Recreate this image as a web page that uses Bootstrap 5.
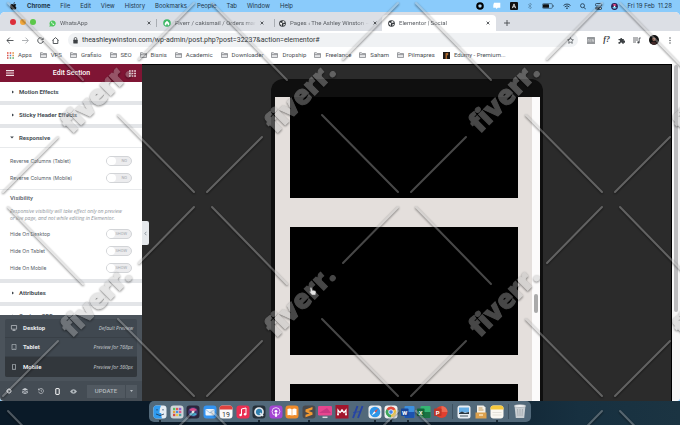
<!DOCTYPE html>
<html lang="en">
<head>
<meta charset="utf-8">
<meta name="viewport" content="width=device-width, initial-scale=1">
<title>Elementor | Social</title>
<link href="https://cdn.jsdelivr.net/npm/bootstrap@5.3.0/dist/css/bootstrap.min.css" rel="stylesheet">
<style>
body{font:6px/8px Roboto,"Liberation Sans",sans-serif;color:#3c4043;background:#0b1b28 linear-gradient(90deg,#0a1a28 0 60%,#173040 85%,#1b3442);height:100vh;overflow:hidden}
svg{display:block;flex:none}
a{color:inherit;text-decoration:none}
button{border:0;background:none;padding:0;color:inherit;font:inherit}
.menubar{height:12px;background:#8acbfb;font-family:Inter,sans-serif;color:#1d3447;padding:0 8px 0 10px}
.menubar nav{gap:10px}
.menubar .status{gap:9px}
.desk{background:#8acbfb;min-height:0}
.browser{background:#fff;border-radius:5px 5px 4px 4px;overflow:hidden;min-height:0}
.tabs{height:19px;background:#dcdfe5;padding:3px 0 0 10px}
.lights{gap:4px;width:33px;padding-bottom:3px}
.lights i{width:6px;height:6px;border-radius:50%}
.red{background:#dc2e3a}.amber{background:#f3a83b}.green{background:#5cc84a}
.tab-item{width:114px;padding:0 5px 0 6px;gap:4px;color:#5a5e63;border-right:1px solid #a9adb3;margin:4px 0;height:8px}
.tab-item.wide{width:118px;padding-right:10px}
.tab-item.slim{width:107px;padding:0 4px;border-color:transparent}
.tab-item.current{background:#fff;border:0;border-radius:4px 4px 0 0;margin:0;height:16px;padding-right:6px}
.tab-name{flex:1;overflow:hidden;white-space:nowrap;-webkit-mask:linear-gradient(90deg,#000 85%,transparent)}
.toolbar{height:18px;padding:0 9px 0 6px;gap:9px}
.toolbar .moves{gap:8px}
.address{background:#f0f2f4;border-radius:7px;height:14px;padding:0 4px 0 5px;gap:4px}
.address input{border:0;background:none;outline:0;padding:0;min-width:0;font:7px/10px Roboto,sans-serif;color:#33373b}
.toolbar .tools{gap:8px}
.fq{font:italic 700 8px/8px "Liberation Serif",serif}
.marks{height:15px;padding:0 7px 3px;gap:8px;color:#4a4e53;white-space:nowrap;overflow:hidden}
.marks a{gap:4px}
.panel{width:142px;background:#fff;color:#555d66;min-height:0}
.panel-top{height:18px;background:#7f1534;color:#fff;font-size:7px;font-weight:500;padding:0 6px}
.panel-scroll{overflow:hidden;min-height:0}
.fold{height:19px;width:100%;padding:0 12px;gap:5px;font-weight:700;color:#495157;text-align:left}
.fold.unfolded{padding-left:10px}
.split{height:4px;background:#e3e5e8;flex:none}
.ctl{height:17px;padding:0 10px;font-family:Inter,sans-serif;font-size:5px}
.group{border-top:1px solid #e8eaec;padding:4px 0 3px}
.sub{padding:0 10px;font-weight:500}
.tog{appearance:none;width:26px;height:10px;border-radius:5px;background:#ececee;border:1px solid #d2d4d7;margin:0;display:flex;align-items:center;justify-content:space-between;padding-right:4px}
.tog::before{content:"";width:9px;height:8px;border-radius:4px;background:#fff}
.tog::after{content:attr(data-off);font:4px/6px Roboto,sans-serif;color:#a4a8ac}
.hint{font:italic 5px/7px "Open Sans",sans-serif;color:#8d9399;padding:6px 0 3px 10px;white-space:nowrap}
.devices{background:#4b535b;padding:4px 5px;color:#e9ebed}
.devices .list{background:#404850;border-radius:2px;overflow:hidden}
.devices button{height:19px;width:100%;padding:0 4px 0 5px;gap:5px;border-bottom:1px solid #394047}
.devices button.chosen{background:#32373c;height:20px;border:0}
.devices .nm{font-weight:700}
.devices .nt{font:italic 5px/8px "Open Sans",sans-serif;color:#c9ced2}
.foot{height:20px;background:#444c54;color:#c5cacf;padding:0 5px 0 6px}
.upd{background:#515961;height:13px;width:38px;font-weight:500;color:#b3b9be}
.upd.more{width:11px;margin-left:1px}
.preview{background:#2b2b2b;border-top:1px solid #000;border-right:1px solid #000;min-width:0}
.phone{width:272px;margin-top:14px;background:#0f0f0f;border-radius:12px 12px 0 0;padding:18px 3px 0 4px;min-height:0}
.screen{background:#e4dfdc;overflow:hidden;min-height:0}
.blocks{padding:0 14px 0 15px;gap:29px;min-height:0}
.blocks div{background:#000;flex:none}
.b1{height:101px}.b2{height:128px}.b3{height:30px}
.vbar{width:8px;background:#fcfbfb;padding:0 2px}
.vbar i{display:block;width:4px;height:19px;border-radius:2px;background:#aaa;margin-top:197px}
.pagebar{width:8px;background:#f7f7f7;padding:1px 2px}
.pagebar i{display:block;width:4px;height:247px;background:#bcbcbe;border-radius:2px}
.fold-tab{position:absolute;left:100%;top:157px;width:7px;height:24px;background:#e6e9ec;border-radius:0 2px 2px 0;z-index:2}
.pointer{position:absolute;left:309px;top:287px}
.dock{width:382px;height:21px;background:#52697a;border-radius:5px;padding:0 4px;margin-bottom:3px}
.dock-main{width:295px}.dock-docs{width:47px}
.dock .bar{width:1px;height:15px;background:#3d5160}
.open-app{position:relative}
.open-app::after{content:"";position:absolute;left:6px;bottom:-3px;width:2px;height:2px;border-radius:50%;background:#0a141c}
.stamp{position:absolute;inset:0;width:100%;height:100%;pointer-events:none;z-index:9}
</style>
<script src="https://cdn.jsdelivr.net/npm/bootstrap@5.3.0/dist/js/bootstrap.bundle.min.js"></script>
</head>
<body class="d-flex flex-column position-relative">
<svg width="0" height="0" class="position-absolute" aria-hidden="true">
<symbol id="folder" viewBox="0 0 7 6"><path d="M.5 5.500V.7h2l.7.8h3.300v4zM.5 2.600h6" fill="#e4e5e7" stroke="#7a7d81" stroke-width=".7"/></symbol>
<symbol id="globe" viewBox="0 0 7 7"><circle cx="3.500" cy="3.500" r="3.300" fill="#303438"/><path d="M1 2.600l1.500.2.8.8-.6.7.3 1.300-.5.2C1.400 5 .9 4 1 2.600zM3.300.9l1.900.4.8 1.200-1.200.1-.6.7-1-.8.6-.6zM4.500 4l1.500.1-.7 1.300-.9.3z" fill="#fff"/></symbol>
<symbol id="cross" viewBox="0 0 4 4"><path d="M.6.6l2.800 2.800M3.400.6L.6 3.400" stroke="#33373b" stroke-width=".8"/></symbol>
<symbol id="side" viewBox="0 0 2 4"><path d="M0 .5L2 2 0 3.500z" fill="#3b4249"/></symbol>
</svg>

<header class="menubar d-flex align-items-center justify-content-between flex-shrink-0">
<nav class="d-flex align-items-center" aria-label="Menu bar">
<svg width="7" height="8" viewBox="0 0 7 8"><path d="M4.900.2C4 .3 3.400 1 3.500 1.800 4.300 1.800 5 1 4.900.2zM5 2c-.7 0-1 .4-1.500.4S2.600 2 2 2C1 2 .2 2.900.2 4.300c0 1.600 1 3.300 1.900 3.300.5 0 .8-.3 1.400-.3s.8.3 1.300.3c.8 0 1.500-1.200 1.700-1.900C5.200 5.100 5.200 3.400 6.300 2.800 6 2.300 5.500 2 5 2z" fill="#111"/></svg>
<a href="#" class="fw-bold">Chrome</a><a href="#">File</a><a href="#">Edit</a><a href="#">View</a><a href="#">History</a><a href="#">Bookmarks</a><a href="#">People</a><a href="#">Tab</a><a href="#">Window</a><a href="#">Help</a>
</nav>
<div class="status d-flex align-items-center">
<svg width="8" height="8" viewBox="0 0 8 8"><circle cx="4" cy="4" r="3.800" fill="#000"/><rect x="2.500" y="2.500" width="3" height="3" rx=".8" fill="#a9d8fb"/></svg>
<svg width="8" height="8" viewBox="0 0 8 8"><path d="M1 .8h6.300v5H4.600L3.500 7.200 3 5.800H.3V3z" fill="#fff"/></svg>
<svg width="8" height="8" viewBox="0 0 8 8"><rect width="8" height="8" rx="1" fill="#111"/><path d="M2.300 6.200L4 1.900l1.700 4.300M2.900 4.800h2.200" fill="none" stroke="#fff" stroke-width=".8"/></svg>
<svg width="6" height="8" viewBox="0 0 6 8"><path d="M1 2.200l3.600 3.400L3 7V1l1.600 1.400L1 5.800" fill="none" stroke="#5b8db0" stroke-width=".7"/></svg>
<svg width="12" height="6" viewBox="0 0 12 6"><rect x=".4" y=".6" width="10" height="4.800" rx="1.200" fill="none" stroke="#37556b" stroke-width=".7"/><rect x="1" y="1.200" width="6" height="3.600" rx=".6" fill="#111"/><path d="M11.200 2v2" stroke="#37556b" stroke-width=".8"/></svg>
<svg width="8" height="7" viewBox="0 0 8 7"><path d="M.5 2.500a5 5 0 017 0M1.700 3.900a3.300 3.300 0 014.600 0" fill="none" stroke="#1d3447" stroke-width=".9"/><path d="M2.900 5a1.600 1.600 0 012.200 0L4 6.300z" fill="#1d3447"/></svg>
<svg width="6" height="7" viewBox="0 0 6 7"><circle cx="2.500" cy="2.700" r="2" fill="none" stroke="#1d3447" stroke-width=".8"/><path d="M4 4.300l1.700 2" stroke="#1d3447" stroke-width=".9"/></svg>
<svg width="7" height="7" viewBox="0 0 7 7"><rect x=".4" y=".5" width="6.200" height="2.500" rx="1.200" fill="none" stroke="#1d3447" stroke-width=".8"/><rect x=".2" y="3.800" width="6.600" height="3" rx="1.500" fill="#1d3447"/><circle cx="5.200" cy="5.300" r=".8" fill="#fff"/></svg>
<svg width="7" height="7" viewBox="0 0 7 7"><circle cx="3.500" cy="3.500" r="3.400" fill="#2a1e52"/><path d="M1.500 2a2.500 2.500 0 014 .2L3.600 3z" fill="#e84a86"/><path d="M1.300 4.400l2.200-1 2.200 1a2.500 2.500 0 01-4.400 0z" fill="#6bd0ef"/><circle cx="3.500" cy="3.500" r=".8" fill="#fff"/></svg>
<span class="text-nowrap">Fri 19 Feb&nbsp; 11.28</span>
</div>
</header>

<div class="desk d-flex flex-column flex-grow-1">
<main class="browser d-flex flex-column flex-grow-1">
<div class="tabs d-flex align-items-start flex-shrink-0">
<div class="lights d-flex align-items-center align-self-center"><i class="red"></i><i class="amber"></i><i class="green"></i></div>
<div class="tab-item d-flex align-items-center"><svg width="7" height="7" viewBox="0 0 7 7"><path d="M.3 6.700l.6-1.700a3.100 3.100 0 111.200 1.200z" fill="#4fc85b"/><path d="M2.200 2c.2 1.500 1.200 2.600 2.700 2.900l.4-.8-.9-.5-.5.3-.9-.9.3-.5L2.900 1.600z" fill="#fff"/></svg><a href="#" class="tab-name">WhatsApp</a><button aria-label="Close tab"><svg width="4" height="4"><use href="#cross"/></svg></button></div>
<div class="tab-item wide d-flex align-items-center"><svg width="8" height="8" viewBox="0 0 8 8"><circle cx="4" cy="4" r="3.800" fill="#3fb867"/><path d="M1.800 4L4 1.800 6.200 4v2.200H4.700V4.800H3.400v1.400H1.800z" fill="#fff"/></svg><a href="#" class="tab-name">Fiverr / cakismail / Orders man</a><button aria-label="Close tab"><svg width="4" height="4"><use href="#cross"/></svg></button></div>
<div class="tab-item slim d-flex align-items-center"><svg width="7" height="7"><use href="#globe"/></svg><a href="#" class="tab-name">Pages ‹ The Ashley Winston —</a><button aria-label="Close tab"><svg width="4" height="4"><use href="#cross"/></svg></button></div>
<div class="tab-item current d-flex align-items-center"><svg width="7" height="7"><use href="#globe"/></svg><a href="#" class="tab-name">Elementor | Social</a><button aria-label="Close tab"><svg width="4" height="4"><use href="#cross"/></svg></button></div>
<button class="align-self-center ps-2" aria-label="New tab"><svg width="6" height="6" viewBox="0 0 6 6"><path d="M3 0v6M0 3h6" stroke="#45494d" stroke-width=".9"/></svg></button>
</div>

<div class="toolbar d-flex align-items-center flex-shrink-0">
<div class="moves d-flex align-items-center">
<button aria-label="Back"><svg width="8" height="7" viewBox="0 0 8 7"><path d="M7.500 3.500H1M3.800.6L.9 3.500l2.900 2.900" fill="none" stroke="#44484c" stroke-width=".9"/></svg></button>
<button aria-label="Forward"><svg width="7" height="7" viewBox="0 0 7 7"><path d="M0 3.500h6M3.500.6l2.900 2.900-2.900 2.900" fill="none" stroke="#a6a9ad" stroke-width=".9"/></svg></button>
<button aria-label="Reload"><svg width="7" height="7" viewBox="0 0 7 7"><path d="M6 2.200A2.800 2.800 0 106.300 4" fill="none" stroke="#44484c" stroke-width=".9"/><path d="M6.700.4v2.600H4.100z" fill="#44484c"/></svg></button>
<button aria-label="Home"><svg width="7" height="7" viewBox="0 0 7 7"><path d="M.3 3.500L3.500.6l3.200 2.900M1.200 3v3.500h4.600V3" fill="none" stroke="#44484c" stroke-width=".9"/></svg></button>
</div>
<div class="address d-flex align-items-center flex-grow-1">
<svg width="5" height="7" viewBox="0 0 5 7"><rect x=".3" y="2.800" width="4.400" height="3.700" rx=".5" fill="#3c4043"/><path d="M1.200 3V1.800a1.300 1.300 0 012.600 0V3" fill="none" stroke="#3c4043" stroke-width=".8"/></svg>
<input class="flex-grow-1" type="text" aria-label="Address" value="theashleywinston.com/wp-admin/post.php?post=32237&amp;action=elementor#">
<button aria-label="Bookmark this page"><svg width="7" height="7" viewBox="0 0 7 7"><path d="M3.500.6l.9 1.900 2 .3L4.900 4.200l.4 2.100-1.800-1-1.800 1 .4-2.100L.6 2.800l2-.3z" fill="none" stroke="#44484c" stroke-width=".7"/></svg></button>
</div>
<div class="tools d-flex align-items-center">
<svg width="8" height="7" viewBox="0 0 8 7"><rect width="8" height="7" rx=".6" fill="#94979a"/><path d="M1 4.800V2.500h1.200v2.300M3.200 2.500h1.200M3.200 3.600h1.200M3.200 4.700h1.200M5.400 4.800V2.300l1.200 2.300V2.300" stroke="#e8e8e8" stroke-width=".5" fill="none"/></svg>
<span class="fq">f?</span>
<svg width="7" height="7" viewBox="0 0 7 7"><path d="M.5 2h1.700a1 1 0 112 0h1.600v1.700a1 1 0 110 1.800v1.200H4.200a1 1 0 10-1.900 0H.5V4.900a1 1 0 100-1.700z" fill="#3c4043"/></svg>
<svg width="8" height="7" viewBox="0 0 8 7"><path d="M0 1h5M0 3h5M0 5h3M6.200 5.500V1h1.600" fill="none" stroke="#44484c" stroke-width=".8"/><circle cx="5.400" cy="5.400" r="1.100" fill="#44484c"/></svg>
<svg width="10" height="10" viewBox="0 0 10 10"><circle cx="5" cy="5" r="5" fill="#111"/><path d="M3 3.200q2-1.600 3.600.2l-.2 2.200q-1.400 1.500-2.800 0z" fill="#a87867"/><path d="M1.800 7.800q3-2.400 6.400 0A5 5 0 015 9.900a5 5 0 01-3.200-2.100z" fill="#452a2a"/></svg>
<button aria-label="More"><svg width="4" height="7" viewBox="0 0 4 7"><g fill="#44484c"><circle cx="3" cy="1" r=".7"/><circle cx="3" cy="3.500" r=".7"/><circle cx="3" cy="6" r=".7"/></g></svg></button>
</div>
</div>

<nav class="marks d-flex align-items-center flex-shrink-0" aria-label="Bookmarks">
<a href="#" class="d-flex align-items-center"><svg width="7" height="7" viewBox="0 0 7 7"><path d="M0 1h1.500M2.700 1h1.500" stroke="#e2503f" stroke-width="1.500"/><path d="M5.400 1h1.500M5.400 3.500h1.500" stroke="#e0913b" stroke-width="1.500"/><path d="M0 3.500h1.500M0 6h1.500" stroke="#d5524e" stroke-width="1.500"/><path d="M2.700 3.500h1.500" stroke="#4d83d8" stroke-width="1.500"/><path d="M2.700 6h1.500M5.400 6h1.500" stroke="#58a765" stroke-width="1.500"/></svg>Apps</a>
<a href="#" class="d-flex align-items-center"><svg width="7" height="6"><use href="#folder"/></svg>VPS</a>
<a href="#" class="d-flex align-items-center"><svg width="7" height="6"><use href="#folder"/></svg>Grafisio</a>
<a href="#" class="d-flex align-items-center"><svg width="7" height="6"><use href="#folder"/></svg>SEO</a>
<a href="#" class="d-flex align-items-center"><svg width="7" height="6"><use href="#folder"/></svg>Bisnis</a>
<a href="#" class="d-flex align-items-center"><svg width="7" height="6"><use href="#folder"/></svg>Academic</a>
<a href="#" class="d-flex align-items-center"><svg width="7" height="6"><use href="#folder"/></svg>Downloader</a>
<a href="#" class="d-flex align-items-center"><svg width="7" height="6"><use href="#folder"/></svg>Dropship</a>
<a href="#" class="d-flex align-items-center"><svg width="7" height="6"><use href="#folder"/></svg>Freelance</a>
<a href="#" class="d-flex align-items-center"><svg width="7" height="6"><use href="#folder"/></svg>Saham</a>
<a href="#" class="d-flex align-items-center"><svg width="7" height="6"><use href="#folder"/></svg>Pilmapres</a>
<a href="#" class="d-flex align-items-center"><svg width="7" height="7" viewBox="0 0 7 7"><path d="M0 0h7v7H0z" fill="#1e1a18"/><path d="M2.500 7V1.200l2.700-.5V3L4 3.400V7z" fill="#a9672c"/></svg>Edumy - Premium...</a>
</nav>

<div class="d-flex flex-grow-1 overflow-hidden">
<aside class="panel d-flex flex-column position-relative flex-shrink-0">
<div class="panel-top d-flex align-items-center justify-content-between flex-shrink-0">
<button aria-label="Menu"><svg width="8" height="6" viewBox="0 0 8 6"><path d="M0 .7h8M0 3h8M0 5.300h8" stroke="#f1dfe4" stroke-width="1.200"/></svg></button>
<span>Edit Section</span>
<button aria-label="Widgets"><svg width="7" height="7" viewBox="0 0 7 7"><path d="M0 1h7M0 3.500h7M0 6h7" stroke="#f1dfe4" stroke-width="1.700" stroke-dasharray="1.700 .9"/></svg></button>
</div>
<div class="panel-scroll flex-grow-1">
<button class="fold d-flex align-items-center"><svg width="2" height="4"><use href="#side"/></svg>Motion Effects</button>
<div class="split"></div>
<button class="fold d-flex align-items-center"><svg width="2" height="4"><use href="#side"/></svg>Sticky Header Effects</button>
<div class="split"></div>
<button class="fold unfolded d-flex align-items-center"><svg width="4" height="3" viewBox="0 0 4 3"><path d="M.2.5h3.600L2 2.600z" fill="#3b4249"/></svg>Responsive</button>
<div class="group">
<div class="ctl d-flex align-items-center justify-content-between"><label for="rt">Reverse Columns (Tablet)</label><input class="tog" type="checkbox" id="rt" data-off="NO"></div>
<div class="ctl d-flex align-items-center justify-content-between"><label for="rm">Reverse Columns (Mobile)</label><input class="tog" type="checkbox" id="rm" data-off="NO"></div>
</div>
<div class="group">
<div class="sub">Visibility</div>
<p class="hint mb-0">Responsive visibility will take effect only on preview<br>or live page, and not while editing in Elementor.</p>
<div class="ctl d-flex align-items-center justify-content-between"><label for="hd">Hide On Desktop</label><input class="tog" type="checkbox" id="hd" data-off="SHOW"></div>
<div class="ctl d-flex align-items-center justify-content-between"><label for="ht">Hide On Tablet</label><input class="tog" type="checkbox" id="ht" data-off="SHOW"></div>
<div class="ctl d-flex align-items-center justify-content-between"><label for="hm">Hide On Mobile</label><input class="tog" type="checkbox" id="hm" data-off="SHOW"></div>
</div>
<div class="split"></div>
<button class="fold d-flex align-items-center"><svg width="2" height="4"><use href="#side"/></svg>Attributes</button>
<div class="split"></div>
<button class="fold d-flex align-items-center"><svg width="2" height="4"><use href="#side"/></svg>Custom CSS</button>
</div>
<div class="devices flex-shrink-0"><div class="list">
<button class="d-flex align-items-center"><svg width="8" height="6" viewBox="0 0 8 6"><path d="M1.400.5h5.200v3.700H1.400zM2.500 5.500h3M4 4v1.500" fill="none" stroke="#c5cacf" stroke-width=".7"/></svg><span class="nm me-auto">Desktop</span><span class="nt">Default Preview</span></button>
<button class="d-flex align-items-center"><svg width="8" height="6" viewBox="0 0 8 6"><path d="M2 .4h4v5.200H2zM3.500 4.800h1" fill="none" stroke="#b5bbc0" stroke-width=".7"/></svg><span class="nm me-auto">Tablet</span><span class="nt">Preview for 768px</span></button>
<button class="chosen d-flex align-items-center"><svg width="8" height="6" viewBox="0 0 8 6"><path d="M2.500.4h3v5.200h-3zM3.700 4.800h.6" fill="none" stroke="#b5bbc0" stroke-width=".7"/></svg><span class="nm me-auto">Mobile</span><span class="nt">Preview for 360px</span></button>
</div></div>
<div class="foot d-flex align-items-center justify-content-between flex-shrink-0">
<button aria-label="Settings"><svg width="6" height="6" viewBox="0 0 6 6"><circle cx="3" cy="3" r="1.700" fill="none" stroke="#c5cacf" stroke-width="1.300"/><path d="M3 0v1M3 5v1M0 3h1M5 3h1M.9.9l.7.7M4.400 4.400l.7.700M5.100.9l-.7.7M.9 5.100l.7-.7" stroke="#c5cacf" stroke-width=".9"/></svg></button>
<button aria-label="Navigator"><svg width="6" height="6" viewBox="0 0 6 6"><path d="M3 0l3 1.400-3 1.400L0 1.400z" fill="#c5cacf"/><path d="M0 3l3 1.300L6 3M0 4.400l3 1.300 3-1.300" fill="none" stroke="#c5cacf" stroke-width=".8"/></svg></button>
<button aria-label="History"><svg width="6" height="6" viewBox="0 0 6 6"><path d="M1 1.500a2.500 2.500 0 11-.4 2.200M3.200 1.700v1.500l1 .6" fill="none" stroke="#c5cacf" stroke-width=".7"/><path d="M.2.300v2h2z" fill="#c5cacf"/></svg></button>
<button aria-label="Responsive mode"><svg width="5" height="7" viewBox="0 0 5 7"><rect x=".8" y=".6" width="3.400" height="5.800" rx=".4" fill="none" stroke="#fff" stroke-width="1"/></svg></button>
<button aria-label="Preview"><svg width="7" height="5" viewBox="0 0 7 5"><path d="M0 2.500q3.500-4.600 7 0-3.500 4.600-7 0z" fill="#b5bbc0"/><circle cx="3.500" cy="2.500" r="1" fill="#444c54"/></svg></button>
<div class="d-flex"><button class="upd">UPDATE</button><button class="upd more d-flex align-items-center justify-content-center" aria-label="Save options"><svg width="3" height="2" viewBox="0 0 3 2"><path d="M0 0l1.500 2L3 0z" fill="#b5bbc0"/></svg></button></div>
</div>
<button class="fold-tab d-flex align-items-center justify-content-center" aria-label="Collapse panel"><svg width="3" height="5" viewBox="0 0 3 5"><path d="M2.300.8L.9 2.500l1.400 1.700" fill="none" stroke="#6d7882" stroke-width=".7"/></svg></button>
</aside>

<section class="preview flex-grow-1 d-flex justify-content-center">
<div class="phone d-flex">
<div class="screen d-flex flex-grow-1">
<div class="blocks d-flex flex-column flex-grow-1"><div class="b1"></div><div class="b2"></div><div class="b3"></div></div>
<div class="vbar"><i></i></div>
</div>
</div>
</section>
<div class="pagebar"><i></i></div>
</div>
</main>
</div>

<footer class="d-flex justify-content-center flex-shrink-0">
<div class="dock d-flex align-items-center justify-content-between">
<div class="dock-main d-flex align-items-center justify-content-between">
<a href="#" class="open-app" aria-label="Finder"><svg width="14" height="14" viewBox="0 0 14 14"><rect x=".5" y=".5" width="13" height="13" rx="3" fill="#e6edf4"/><path d="M3.500.5H8Q6.300 4 6.500 8h1.700q0 3 .7 5.500H3.500a3 3 0 01-3-3v-7a3 3 0 013-3z" fill="#2f9bf0"/><path d="M4 4v1.500M10 4v1.500M3 9q4 3 8 0" fill="none" stroke="#163450" stroke-width=".8"/></svg></a>
<a href="#" aria-label="Launchpad"><svg width="14" height="14" viewBox="0 0 14 14"><rect x=".5" y=".5" width="13" height="13" rx="3" fill="#cfd5da"/><g stroke-width="2.300"><path d="M3 4h2.300" stroke="#5bbf62"/><path d="M6 4h2.300" stroke="#e25b4d"/><path d="M9 4h2.300" stroke="#8e60cf"/><path d="M3 7h2.300" stroke="#e7a03e"/><path d="M6 7h2.300" stroke="#4d8ee0"/><path d="M9 7h2.300" stroke="#e0598e"/><path d="M3 10h2.300" stroke="#d74949"/><path d="M6 10h2.300" stroke="#efc646"/><path d="M9 10h2.300" stroke="#51a5a5"/></g></svg></a>
<a href="#" aria-label="Siri"><svg width="14" height="14" viewBox="0 0 14 14"><rect x=".5" y=".5" width="13" height="13" rx="3" fill="#29263a"/><circle cx="7" cy="7" r="4.800" fill="#463a75"/><path d="M3 5q4-4 8 0L7.500 7z" fill="#db4d8b"/><path d="M3 9l4-2 4 2q-4 4-8 0z" fill="#4db8dc"/><circle cx="7" cy="7" r="1.300" fill="#fff"/></svg></a>
<a href="#" aria-label="Mail"><svg width="14" height="14" viewBox="0 0 14 14"><rect x=".5" y=".5" width="13" height="13" rx="3" fill="#3494f1"/><rect x="2.500" y="4" width="9" height="6.500" rx="1" fill="#eef5fb"/><path d="M2.700 4.500L7 8l4.300-3.500" fill="none" stroke="#76aee2" stroke-width=".7"/></svg></a>
<a href="#" aria-label="Calendar"><svg width="14" height="14" viewBox="0 0 14 14"><rect x=".5" y=".5" width="13" height="13" rx="3" fill="#fafafa"/><path d="M.5 4.500v-1a3 3 0 013-3h7a3 3 0 013 3v1z" fill="#e0433f"/><text x="7" y="11.500" text-anchor="middle" font-family="Roboto" font-size="7" fill="#333">19</text></svg></a>
<a href="#" aria-label="Music"><svg width="14" height="14" viewBox="0 0 14 14"><rect x=".5" y=".5" width="13" height="13" rx="3" fill="#e92f52"/><path d="M5.500 9.800V4l4.500-1v6" fill="none" stroke="#fff" stroke-width="1"/><circle cx="4.600" cy="10" r="1.300" fill="#fff"/><circle cx="9.100" cy="9.200" r="1.300" fill="#fff"/></svg></a>
<a href="#" class="open-app" aria-label="QuickTime"><svg width="14" height="14" viewBox="0 0 14 14"><rect x=".5" y=".5" width="13" height="13" rx="3" fill="#27313a"/><circle cx="7" cy="7" r="4" fill="#2f7fae" stroke="#e3e9ee" stroke-width="1.700"/><path d="M8 8l3 3" stroke="#e3e9ee" stroke-width="1.700"/></svg></a>
<a href="#" aria-label="Podcasts"><svg width="14" height="14" viewBox="0 0 14 14"><rect x=".5" y=".5" width="13" height="13" rx="3" fill="#a445d3"/><circle cx="7" cy="6.500" r="3.900" fill="none" stroke="#eedcf8" stroke-width=".9"/><circle cx="7" cy="6.300" r="1.400" fill="#fff"/><path d="M5.900 8.300h2.200l-.4 3.700H6.300z" fill="#fff"/></svg></a>
<a href="#" aria-label="Books"><svg width="14" height="14" viewBox="0 0 14 14"><rect x=".5" y=".5" width="13" height="13" rx="3" fill="#ee8b2b"/><path d="M2.500 4q2.500-1 4.200.3V10.500q-2-1-4.200-.2zM11.500 4Q9 3 7.300 4.300V10.500q2-1 4.200-.2z" fill="#fff"/></svg></a>
<a href="#" class="open-app" aria-label="Sublime Text"><svg width="14" height="14" viewBox="0 0 14 14"><rect x=".5" y=".5" width="13" height="13" rx="3" fill="#4a4a4c"/><path d="M3.500 4.500L10.500 2v2.500L6.500 6l4 1.400V9.800L3.500 12.200V9.800L7.500 8.400 3.500 7z" fill="#f29a32"/></svg></a>
<a href="#" aria-label="CleanMyMac"><svg width="14" height="14" viewBox="0 0 14 14"><rect y="1" width="14" height="9.500" rx="1.200" fill="#e7468f"/><path d="M1 8h12L9 3z" fill="#c93883"/><path d="M4.500 12.300h5" stroke="#d6d9dc" stroke-width="1.500"/></svg></a>
<a href="#" aria-label="Mendeley"><svg width="14" height="14" viewBox="0 0 14 14"><rect x=".5" width="13" height="13.500" fill="#a3152c"/><path d="M3 9V5l2 2.500 2-2 2 2L11 5v4" fill="none" stroke="#fff" stroke-width="1.200"/><circle cx="7" cy="5.500" r="1.200" fill="#fff"/><circle cx="3" cy="9.500" r="1" fill="#fff"/><circle cx="11" cy="9.500" r="1" fill="#fff"/></svg></a>
<a href="#" aria-label="Editor"><svg width="14" height="14" viewBox="0 0 14 14"><path d="M2 13L6.500 1M7 13l4.500-12" stroke="#2644a5" stroke-width="1.900"/><path d="M2 7.500l8-1" stroke="#2644a5" stroke-width=".8"/></svg></a>
<a href="#" class="open-app" aria-label="Safari"><svg width="14" height="14" viewBox="0 0 14 14"><rect x=".5" y=".5" width="13" height="13" rx="3" fill="#e9edf0"/><circle cx="7" cy="7" r="5.300" fill="#2f96e8"/><path d="M10.500 3.500L7.700 7.700 6.300 6.300z" fill="#eb4a42"/><path d="M3.500 10.500l2.800-4.200 1.400 1.400z" fill="#fff"/></svg></a>
<a href="#" class="open-app" aria-label="Chrome"><svg width="14" height="14" viewBox="0 0 14 14"><rect x=".5" y=".5" width="13" height="13" rx="3" fill="#f0f1f2"/><path d="M7 7L2.300 4.300a5.400 5.400 0 019.400 0z" fill="#df4a3b"/><path d="M7 7l4.700-2.700A5.400 5.400 0 017 12.400z" fill="#f3c73d"/><path d="M7 7v5.400A5.400 5.400 0 012.300 4.300z" fill="#3fa65a"/><circle cx="7" cy="7" r="2.300" fill="#4384ec" stroke="#fff" stroke-width=".8"/></svg></a>
<a href="#" class="open-app" aria-label="Word"><svg width="14" height="14" viewBox="0 0 14 14"><rect x="3.500" y="1" width="10" height="12" rx="1" fill="#3d8fde"/><path d="M3.500 7h10v5a1 1 0 01-1 1h-8a1 1 0 01-1-1z" fill="#1d53ae"/><rect y="3.500" width="7.500" height="7.500" rx=".8" fill="#17479b"/><text x="3.700" y="9.500" text-anchor="middle" font-family="Roboto" font-weight="700" font-size="6" fill="#fff">W</text></svg></a>
<a href="#" aria-label="Excel"><svg width="14" height="14" viewBox="0 0 14 14"><rect x="3.500" y="1" width="10" height="12" rx="1" fill="#34b573"/><path d="M3.500 7h10v5a1 1 0 01-1 1h-8a1 1 0 01-1-1z" fill="#1a7343"/><rect y="3.500" width="7.500" height="7.500" rx=".8" fill="#12693a"/><text x="3.700" y="9.500" text-anchor="middle" font-family="Roboto" font-weight="700" font-size="6" fill="#fff">X</text></svg></a>
<a href="#" aria-label="PowerPoint"><svg width="14" height="14" viewBox="0 0 14 14"><circle cx="7.500" cy="7" r="6" fill="#e0402f"/><path d="M7.500 7V1a6 6 0 016 6z" fill="#ec6a52"/><rect y="3.500" width="7.500" height="7.500" rx=".8" fill="#bd3727"/><text x="3.700" y="9.500" text-anchor="middle" font-family="Roboto" font-weight="700" font-size="6" fill="#fff">P</text></svg></a>
</div>
<span class="bar"></span>
<div class="dock-docs d-flex align-items-center justify-content-between">
<a href="#" aria-label="Preview"><svg width="14" height="14" viewBox="0 0 14 14"><rect x=".5" y=".5" width="13" height="13" rx="2.500" fill="#e8eef3"/><path d="M2 2.500h10v5H2z" fill="#65aee6"/><path d="M2 8l3-1.500L8 8l4-1v2H2z" fill="#2a3740"/><path d="M3 11h8" stroke="#7d8b95" stroke-width="1.500"/></svg></a>
<a href="#" aria-label="Archive"><svg width="14" height="14" viewBox="0 0 14 14"><path d="M3 .5h6.500l2 2V9H3z" fill="#f3efe6"/><path d="M4.500 3h4M4.500 5h5" stroke="#c69a59" stroke-width="1"/><path d="M1.500 7.500h11v6h-11z" fill="#dba04d"/><path d="M5 10h4" stroke="#fff2d8" stroke-width="1.200"/></svg></a>
<a href="#" class="open-app" aria-label="Notes"><svg width="14" height="14" viewBox="0 0 14 14"><rect x=".5" y=".5" width="13" height="13" rx="3" fill="#faf8f2"/><path d="M.5 4.500v-1a3 3 0 013-3h7a3 3 0 013 3v1z" fill="#f6c83d"/><path d="M2.500 7.500h9M2.500 10h9" stroke="#d6d3cb" stroke-width=".6"/></svg></a>
</div>
<span class="bar"></span>
<a href="#" aria-label="Trash"><svg width="14" height="15" viewBox="0 0 14 15"><path d="M1.500 1.500h11L11.200 14H2.800z" fill="#c9ced2"/><ellipse cx="7" cy="2" rx="5.600" ry="1.500" fill="#f0f2f4" stroke="#969da3" stroke-width=".6"/><path d="M4.500 5l.5 7M7 5v7M9.500 5L9 12" stroke="#9ba2a8" stroke-width=".7"/></svg></a>
</div>
</footer>

<svg class="pointer" width="8" height="9" viewBox="0 0 8 9" aria-hidden="true"><path d="M1.800.5q.9 0 1 1l.3 1.800 3 .4q1 .2.9 1.500L6.500 8H3L.6 5q0-.9 1-.6L1.200 1.300Q1.200.5 1.800.5z" fill="#fff" stroke="#333" stroke-width=".5"/></svg>

<svg class="stamp" aria-hidden="true">
<defs>
<filter id="glass" x="0" y="0" width="204" height="204" filterUnits="userSpaceOnUse" color-interpolation-filters="sRGB">
<feGaussianBlur in="SourceAlpha" stdDeviation=".8" result="b"/><feOffset in="b" dx="0" dy=".7" result="o"/>
<feComposite in="o" in2="SourceAlpha" operator="out" result="ring"/>
<feComponentTransfer in="ring" result="shade"><feFuncA type="linear" slope=".5"/></feComponentTransfer>
<feComponentTransfer in="SourceGraphic" result="body"><feFuncA type="linear" slope=".38"/></feComponentTransfer>
<feMerge><feMergeNode in="shade"/><feMergeNode in="body"/></feMerge>
</filter>
<pattern id="tile" width="204" height="204" patternUnits="userSpaceOnUse">
<g filter="url(#glass)" stroke="#bcbcbc" stroke-width="2" stroke-linecap="round">
<path d="M8 3L83 80M118 115L194 192M58 137L3 192M194 3L139 59"/>
<text transform="translate(72 134) rotate(-45)" font-family="Open Sans" font-weight="800" font-size="27" fill="#bcbcbc" stroke="#bcbcbc" stroke-width="1">fiverr.</text>
</g>
</pattern>
</defs>
<rect width="100%" height="100%" fill="url(#tile)"/>
</svg>
</body>
</html>
